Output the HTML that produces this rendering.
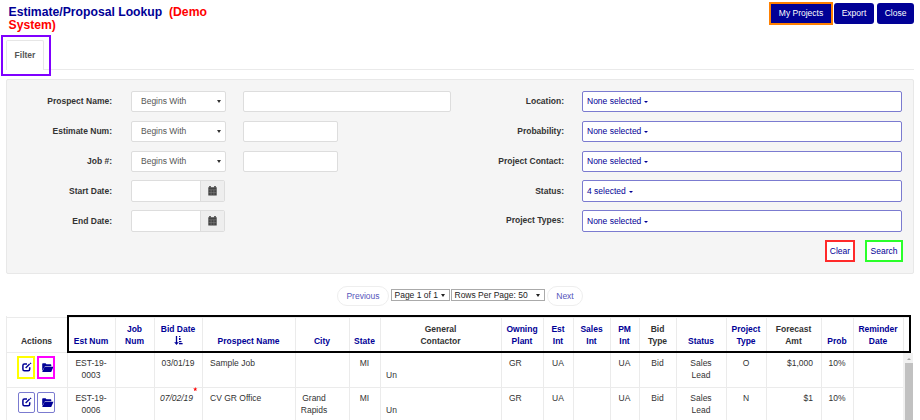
<!DOCTYPE html>
<html><head><meta charset="utf-8">
<style>
*{box-sizing:border-box;margin:0;padding:0}
html,body{width:920px;height:420px;overflow:hidden;background:#fff;font-family:"Liberation Sans",sans-serif;font-size:8.5px;color:#333}
.abs{position:absolute}
#title{left:8.5px;top:6px;width:240px;font-size:12.2px;font-weight:bold;line-height:13px;color:#000096}
#title span{color:#f00}
.tbtn{position:absolute;top:3px;height:21px;background:#000096;color:#fff;border-radius:3px;font-size:8.5px;text-align:center;line-height:21px}
#purple{left:1px;top:35px;width:50px;height:41px;border:2px solid #7f00ff}
#tab{left:6px;top:40px;width:38px;height:30px;border:1px solid #e6e6e6;border-bottom:none;border-radius:2px 2px 0 0;background:#fff;font-weight:bold;color:#555;text-align:center;line-height:28px}
#tabline{left:44px;top:69px;width:870px;height:1px;background:#eaeaea}
#panel{left:6px;top:79px;width:908px;height:195px;background:#f5f5f5;border:1px solid #e8e8e8;border-radius:2px}
.lbl{position:absolute;font-weight:bold;color:#333;text-align:right;width:120px;line-height:12px}
.sel{position:absolute;left:131px;width:95px;height:21px;background:#fff;border:1px solid #ddd;border-radius:2px;color:#555;line-height:19px;padding-left:9px}
.sel:after{content:"";position:absolute;right:4px;top:8px;border-left:2px solid transparent;border-right:2px solid transparent;border-top:3px solid #333}
.inp{position:absolute;left:243px;height:21px;background:#fff;border:1px solid #ddd;border-radius:2px}
.date{position:absolute;left:131px;width:94px;height:22px;background:#fff;border:1px solid #ddd;border-radius:2px;overflow:hidden}
.date .add{position:absolute;right:0;top:0;width:24px;height:100%;background:#eee;border-left:1px solid #ddd}
.cal{position:absolute;left:8px;top:6px;width:8px;height:8px;background:#555}
.ms{position:absolute;left:582px;width:320px;height:21px;background:#fff;border:1px solid #7b7bd0;border-radius:2px;color:#000096;line-height:19px;padding-left:4px}
.ms i{display:inline-block;margin-left:3px;vertical-align:middle;border-left:2.5px solid transparent;border-right:2.5px solid transparent;border-top:2.5px solid #000096;position:relative;top:0px}
.obtn{position:absolute;background:#fff;color:#000096;text-align:center}
</style><style>
.pill{position:absolute;border:1px solid #eee;border-radius:10px;color:#5555bb;text-align:center;line-height:18px;background:#fff}
.psel{position:absolute;height:12px;border:1px solid #aaa;color:#222;font-size:8.5px;line-height:10px;padding-left:2.5px}
.psel i{position:absolute;right:4px;top:4px;border-left:2px solid transparent;border-right:2px solid transparent;border-top:3px solid #222}
.hl{position:absolute;height:1px;background:#ebebeb}
.vl{position:absolute;width:1px;background:#ebebeb}
.th{position:absolute;text-align:center;font-weight:bold;line-height:12px}
.th.b{color:#000096}.th.g{color:#333}
.sort{display:inline-block;width:9px;height:7px;background:#000096}
.bbox{position:absolute;border:2px solid #000}
.td{position:absolute;line-height:12px;color:#333}
.td.l{text-align:left;padding-left:8px}.td.c{text-align:center}.td.r{text-align:right;padding-right:8px}
.abtn{position:absolute;width:17px;height:21px;border:1px solid #7b7bd0;border-radius:2px;background:#fff}
.ed{position:absolute;left:4px;top:6px;width:8px;height:8px;border:2px solid #000080;border-radius:2px}
.fo{position:absolute;left:3px;top:6px;width:10px;height:8px;background:#000080}
</style></head><body>
<div id="title" class="abs">Estimate/Proposal Lookup&nbsp; <span>(Demo System)</span></div>
<div class="tbtn" style="left:769px;top:2px;width:64px;height:23px;border:2px solid #ff8000;border-radius:0;line-height:19px">My Projects</div>
<div class="tbtn" style="left:834px;width:40px">Export</div>
<div class="tbtn" style="left:877px;width:37px">Close</div>

<div id="tabline" class="abs"></div>
<div id="tab" class="abs">Filter</div>
<div id="purple" class="abs"></div>

<div id="panel" class="abs"></div>
<div class="lbl" style="left:-8px;top:95px">Prospect Name:</div>
<div class="lbl" style="left:-8px;top:125px">Estimate Num:</div>
<div class="lbl" style="left:-8px;top:155px">Job #:</div>
<div class="lbl" style="left:-8px;top:185px">Start Date:</div>
<div class="lbl" style="left:-8px;top:215px">End Date:</div>
<div class="sel" style="top:91px">Begins With</div>
<div class="sel" style="top:121px">Begins With</div>
<div class="sel" style="top:151px">Begins With</div>
<div class="inp" style="top:91px;width:208px"></div>
<div class="inp" style="top:121px;width:95px"></div>
<div class="inp" style="top:151px;width:95px"></div>
<div class="date" style="top:180px"><div class="add"><svg style="position:absolute;left:7px;top:5px" width="9" height="10" viewBox="0 0 9 10"><path d="M0.3 1.2 H8.7 V9.6 H0.3 Z" fill="#444"/><rect x="1.2" y="0" width="1.6" height="1.6" fill="#444"/><rect x="6.2" y="0" width="1.6" height="1.6" fill="#444"/><path d="M0.3 3.8 H8.7 M0.3 6.6 H8.7 M3.1 3.8 V9.6 M5.9 3.8 V9.6" stroke="#8a8a8a" stroke-width="0.5"/></svg></div></div>
<div class="date" style="top:210px"><div class="add"><svg style="position:absolute;left:7px;top:5px" width="9" height="10" viewBox="0 0 9 10"><path d="M0.3 1.2 H8.7 V9.6 H0.3 Z" fill="#444"/><rect x="1.2" y="0" width="1.6" height="1.6" fill="#444"/><rect x="6.2" y="0" width="1.6" height="1.6" fill="#444"/><path d="M0.3 3.8 H8.7 M0.3 6.6 H8.7 M3.1 3.8 V9.6 M5.9 3.8 V9.6" stroke="#8a8a8a" stroke-width="0.5"/></svg></div></div>

<div class="lbl" style="left:444px;top:95px">Location:</div>
<div class="lbl" style="left:444px;top:125px">Probability:</div>
<div class="lbl" style="left:444px;top:155px">Project Contact:</div>
<div class="lbl" style="left:444px;top:185px">Status:</div>
<div class="lbl" style="left:444px;top:214px">Project Types:</div>
<div class="ms" style="top:91px">None selected<i></i></div>
<div class="ms" style="top:121px">None selected<i></i></div>
<div class="ms" style="top:151px">None selected<i></i></div>
<div class="ms" style="top:180px;height:22px;line-height:20px">4 selected<i></i></div>
<div class="ms" style="top:210px;height:22px;line-height:20px">None selected<i></i></div>
<div class="obtn" style="left:825px;top:240px;width:30px;height:22px;border:2px solid #ff2a2a;line-height:18px">Clear</div>
<div class="obtn" style="left:865px;top:240px;width:38px;height:22px;border:2px solid #2aff2a;line-height:18px">Search</div>

<div class="pill" style="left:337px;top:286px;width:52px;height:20px">Previous</div>
<div class="psel" style="left:391px;top:289px;width:59px">Page 1 of 1<i></i></div>
<div class="psel" style="left:451px;top:289px;width:94px">Rows Per Page: 50<i></i></div>
<div class="pill" style="left:547px;top:286px;width:36px;height:20px">Next</div>
<div class="hl" style="left:6px;top:317px;width:905px"></div>
<div class="hl" style="left:6px;top:352px;width:905px"></div>
<div class="hl" style="left:6px;top:387px;width:899px"></div>
<div class="vl" style="left:6px;top:316px;height:104px"></div>
<div class="vl" style="left:67px;top:316px;height:104px"></div>
<div class="vl" style="left:115px;top:316px;height:104px"></div>
<div class="vl" style="left:154px;top:316px;height:104px"></div>
<div class="vl" style="left:202px;top:316px;height:104px"></div>
<div class="vl" style="left:295px;top:316px;height:104px"></div>
<div class="vl" style="left:349px;top:316px;height:104px"></div>
<div class="vl" style="left:380px;top:316px;height:104px"></div>
<div class="vl" style="left:501px;top:316px;height:104px"></div>
<div class="vl" style="left:543px;top:316px;height:104px"></div>
<div class="vl" style="left:573px;top:316px;height:104px"></div>
<div class="vl" style="left:610px;top:316px;height:104px"></div>
<div class="vl" style="left:639px;top:316px;height:104px"></div>
<div class="vl" style="left:676px;top:316px;height:104px"></div>
<div class="vl" style="left:726px;top:316px;height:104px"></div>
<div class="vl" style="left:766px;top:316px;height:104px"></div>
<div class="vl" style="left:821px;top:316px;height:104px"></div>
<div class="vl" style="left:853px;top:316px;height:104px"></div>
<div class="vl" style="left:903px;top:316px;height:104px"></div>
<div class="th g" style="left:6px;top:335px;width:61px">Actions</div>
<div class="th b" style="left:67px;top:335px;width:48px">Est Num</div>
<div class="th b" style="left:115px;top:323px;width:39px">Job<br>Num</div>
<div class="th b" style="left:154px;top:323px;width:48px">Bid Date<br></div>
<div class="th b" style="left:202px;top:335px;width:93px">Prospect Name</div>
<div class="th b" style="left:295px;top:335px;width:54px">City</div>
<div class="th b" style="left:349px;top:335px;width:31px">State</div>
<div class="th g" style="left:380px;top:323px;width:121px">General<br>Contactor</div>
<div class="th b" style="left:501px;top:323px;width:42px">Owning<br>Plant</div>
<div class="th b" style="left:543px;top:323px;width:30px">Est<br>Int</div>
<div class="th b" style="left:573px;top:323px;width:37px">Sales<br>Int</div>
<div class="th b" style="left:610px;top:323px;width:29px">PM<br>Int</div>
<div class="th g" style="left:639px;top:323px;width:37px">Bid<br>Type</div>
<div class="th b" style="left:676px;top:335px;width:50px">Status</div>
<div class="th b" style="left:726px;top:323px;width:40px">Project<br>Type</div>
<div class="th g" style="left:766px;top:323px;width:55px">Forecast<br>Amt</div>
<div class="th b" style="left:821px;top:335px;width:32px">Prob</div>
<div class="th b" style="left:853px;top:323px;width:50px">Reminder<br>Date</div>
<svg class="abs" style="left:173px;top:335px" width="10" height="11" viewBox="0 0 10 11"><path d="M3.5 1 V8" stroke="#000096" stroke-width="1.3"/><path d="M1.2 7.2 H5.8 L3.5 10 Z" fill="#000096"/><rect x="6" y="1" width="1.3" height="1" fill="#000096"/><rect x="6" y="3" width="1.6" height="2" fill="#000096"/><rect x="6" y="6" width="2.5" height="1.2" fill="#000096"/><rect x="6" y="8" width="3.6" height="1.3" fill="#000096"/></svg>
<div class="bbox" style="left:67px;top:315px;width:844px;height:38px"></div>
<div class="td c" style="left:67px;top:357px;width:48px;">EST-19-<br>0003</div>
<div class="td c" style="left:154px;top:357px;width:48px;">03/01/19</div>
<div class="td l" style="left:202px;top:357px;width:93px;padding-left:8px">Sample Job</div>
<div class="td c" style="left:349px;top:357px;width:31px;">MI</div>
<div class="td l" style="left:380px;top:357px;width:121px;padding-left:6px"><br>Un</div>
<div class="td l" style="left:501px;top:357px;width:42px;padding-left:8px">GR</div>
<div class="td c" style="left:543px;top:357px;width:30px;">UA</div>
<div class="td c" style="left:610px;top:357px;width:29px;">UA</div>
<div class="td c" style="left:639px;top:357px;width:37px;">Bid</div>
<div class="td c" style="left:676px;top:357px;width:50px;">Sales<br>Lead</div>
<div class="td c" style="left:726px;top:357px;width:40px;">O</div>
<div class="td r" style="left:766px;top:357px;width:55px;">$1,000</div>
<div class="td c" style="left:821px;top:357px;width:32px;">10%</div>
<div class="td c" style="left:67px;top:392px;width:48px;">EST-19-<br>0006</div>
<div class="td c" style="left:154px;top:392px;width:48px;"><i style="position:relative;left:-1.5px">07/02/19</i></div>
<div class="td l" style="left:202px;top:392px;width:93px;padding-left:8px">CV GR Office</div>
<div class="td c" style="left:295px;top:392px;width:54px;padding-right:16px">Grand<br>Rapids</div>
<div class="td c" style="left:349px;top:392px;width:31px;">MI</div>
<div class="td l" style="left:380px;top:392px;width:121px;padding-left:6px"><br>Un</div>
<div class="td l" style="left:501px;top:392px;width:42px;padding-left:8px">GR</div>
<div class="td c" style="left:543px;top:392px;width:30px;">UA</div>
<div class="td c" style="left:610px;top:392px;width:29px;">UA</div>
<div class="td c" style="left:639px;top:392px;width:37px;">Bid</div>
<div class="td c" style="left:676px;top:392px;width:50px;">Sales<br>Lead</div>
<div class="td c" style="left:726px;top:392px;width:40px;">N</div>
<div class="td r" style="left:766px;top:392px;width:55px;">$1</div>
<div class="td c" style="left:821px;top:392px;width:32px;">10%</div>
<div class="abtn" style="left:18px;top:357px;border-color:transparent"><svg class="abs" style="left:2px;top:4px" width="11" height="10" viewBox="0 0 11 10"><path d="M6 1.9 H3.4 Q1.9 1.9 1.9 3.4 V7.3 Q1.9 8.8 3.4 8.8 H7.2 Q8.7 8.8 8.7 7.3 V5.2" fill="none" stroke="#000096" stroke-width="1.5"/><path d="M4.6 6.1 L8.6 2.1" stroke="#000096" stroke-width="1.4"/><path d="M9.1 0.8 L10.1 1.8" stroke="#000096" stroke-width="1.1"/></svg></div>
<div class="abtn" style="left:37px;top:357px;width:18px;border-color:transparent"><svg class="abs" style="left:4px;top:5px" width="12" height="10" viewBox="0 0 12 10"><path d="M0.2 1 Q0.2 0.3 1 0.3 H3.6 L4.4 1.2 H8.6 Q9.3 1.2 9.3 2 V3.2 H3 L0.2 8 Z" fill="#000096"/><path d="M2.6 3.8 H11.5 L9.2 8.9 H0.2 Z" fill="#000096"/></svg></div>
<div class="abtn" style="left:18px;top:392px;border-color:#7b7bd0"><svg class="abs" style="left:2px;top:4px" width="11" height="10" viewBox="0 0 11 10"><path d="M6 1.9 H3.4 Q1.9 1.9 1.9 3.4 V7.3 Q1.9 8.8 3.4 8.8 H7.2 Q8.7 8.8 8.7 7.3 V5.2" fill="none" stroke="#000096" stroke-width="1.5"/><path d="M4.6 6.1 L8.6 2.1" stroke="#000096" stroke-width="1.4"/><path d="M9.1 0.8 L10.1 1.8" stroke="#000096" stroke-width="1.1"/></svg></div>
<div class="abtn" style="left:37px;top:392px;width:18px;border-color:#7b7bd0"><svg class="abs" style="left:4px;top:5px" width="12" height="10" viewBox="0 0 12 10"><path d="M0.2 1 Q0.2 0.3 1 0.3 H3.6 L4.4 1.2 H8.6 Q9.3 1.2 9.3 2 V3.2 H3 L0.2 8 Z" fill="#000096"/><path d="M2.6 3.8 H11.5 L9.2 8.9 H0.2 Z" fill="#000096"/></svg></div>
<div class="abs" style="left:17px;top:356px;width:18px;height:23px;border:2px solid #ffff00"></div>
<div class="abs" style="left:37px;top:356px;width:18px;height:23px;border:2px solid #ff00ff"></div>
<svg class="abs" style="left:193px;top:386.5px" width="4.5" height="4.5" viewBox="0 0 10 10"><path d="M5 0 L6.2 3.4 L9.8 3.4 L6.9 5.6 L8 9.2 L5 7 L2 9.2 L3.1 5.6 L0.2 3.4 L3.8 3.4 Z" fill="#f00"/></svg>
<div class="abs" style="left:903px;top:353px;width:10px;height:67px;background:#f1f1f1"></div>
<div class="abs" style="left:905px;top:363px;width:8px;height:57px;background:#c1c1c1"></div>
<div class="abs" style="left:906.5px;top:357.5px;border-left:2.5px solid transparent;border-right:2.5px solid transparent;border-bottom:2.5px solid #a3a3a3"></div>
</body></html>
